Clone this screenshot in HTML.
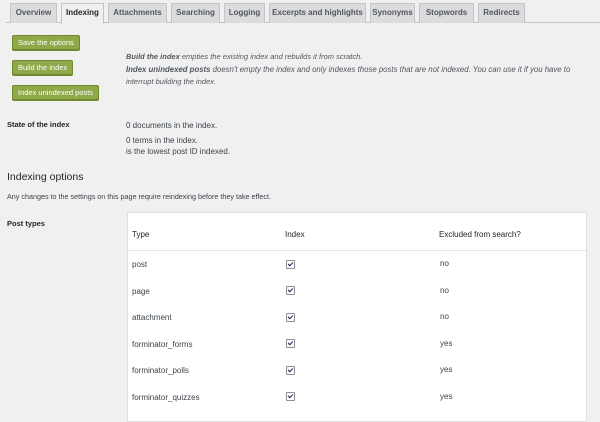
<!DOCTYPE html>
<html><head><meta charset="utf-8"><style>
*{margin:0;padding:0;box-sizing:border-box}
body{width:600px;height:411px;overflow:hidden;background:#f0f0f1;font-family:"Liberation Sans",sans-serif;color:#1d2327;position:relative;font-size:7.5px}
.a{position:absolute;white-space:nowrap}
.tabline{position:absolute;left:6px;right:0;top:22px;height:1px;background:#c3c4c7}
.tab{position:absolute;top:3px;height:20px;background:#dcdcde;border:1px solid #c3c4c7;border-bottom:none;font-size:8px;font-weight:bold;color:#50575e;text-align:center;line-height:18px}
.tab.on{background:#f0f0f1;color:#1d2327;height:21px}
.btn{position:absolute;left:12px;height:15px;background:#8fa84a;border:1px solid #6f8a2e;border-radius:2px;color:#fff;font-size:7.5px;line-height:13px;padding:0 5px;box-shadow:0 1px 0 #6f8a2e}
.it{font-style:italic;color:#50575e;font-size:7.5px}
.tbl{position:absolute;left:127px;top:212px;width:460px;height:210px;background:#fff;border:1px solid #e0e0e0}
.cb{position:absolute;width:9px;height:9px;border:1px solid #8c8f94;background:#fff;border-radius:1px}
.cb:after{content:"";position:absolute;left:2px;top:0px;width:2px;height:4px;border:solid #1e1e50;border-width:0 1.3px 1.3px 0;transform:rotate(45deg)}
.t{font-size:8px}
</style></head><body>
<div class="tabline"></div>
<div class="tab" style="left:10px;width:47px">Overview</div>
<div class="tab on" style="left:61px;width:43px">Indexing</div>
<div class="tab" style="left:108px;width:59px">Attachments</div>
<div class="tab" style="left:171px;width:49px">Searching</div>
<div class="tab" style="left:224px;width:41px">Logging</div>
<div class="tab" style="left:269px;width:97px">Excerpts and highlights</div>
<div class="tab" style="left:370px;width:45px">Synonyms</div>
<div class="tab" style="left:419px;width:55px">Stopwords</div>
<div class="tab" style="left:478px;width:47px">Redirects</div>

<div class="btn" style="top:35px">Save the options</div>
<div class="btn" style="top:60px">Build the index</div>
<div class="btn" style="top:85px">Index unindexed posts</div>

<div class="a it" style="left:126px;top:52px"><b>Build the index</b> empties the existing index and rebuilds it from scratch.</div>
<div class="a it" style="left:126px;top:65px;font-size:7.8px"><b>Index unindexed posts</b> doesn't empty the index and only indexes those posts that are not indexed. You can use it if you have to</div>
<div class="a it" style="left:126px;top:77px">interrupt building the index.</div>

<div class="a" style="left:7px;top:120px;font-weight:bold;font-size:7.5px">State of the index</div>
<div class="a t" style="left:126px;top:121px;color:#3c434a">0 documents in the index.</div>
<div class="a t" style="left:126px;top:136px;color:#3c434a">0 terms in the index.</div>
<div class="a t" style="left:126px;top:147px;color:#3c434a">is the lowest post ID indexed.</div>

<div class="a" style="left:7px;top:171px;font-size:10.5px">Indexing options</div>
<div class="a" style="left:7px;top:192px;font-size:7.2px;color:#3c434a">Any changes to the settings on this page require reindexing before they take effect.</div>
<div class="a" style="left:7px;top:219px;font-weight:bold">Post types</div>

<div class="tbl">
<div style="position:absolute;left:0;right:0;top:37px;height:1px;background:#e5e5e5"></div>
</div>
<div class="a t" style="left:132px;top:230px">Type</div>
<div class="a t" style="left:285px;top:230px">Index</div>
<div class="a t" style="left:439px;top:230px">Excluded from search?</div>

<div class="a t" style="left:132px;top:260px;color:#3c434a">post</div><div class="cb" style="left:286px;top:260px"></div><div class="a t" style="left:440px;top:259px;color:#3c434a">no</div>
<div class="a t" style="left:132px;top:287px;color:#3c434a">page</div><div class="cb" style="left:286px;top:286px"></div><div class="a t" style="left:440px;top:286px;color:#3c434a">no</div>
<div class="a t" style="left:132px;top:313px;color:#3c434a">attachment</div><div class="cb" style="left:286px;top:313px"></div><div class="a t" style="left:440px;top:312px;color:#3c434a">no</div>
<div class="a t" style="left:132px;top:340px;color:#3c434a">forminator_forms</div><div class="cb" style="left:286px;top:339px"></div><div class="a t" style="left:440px;top:339px;color:#3c434a">yes</div>
<div class="a t" style="left:132px;top:366px;color:#3c434a">forminator_polls</div><div class="cb" style="left:286px;top:366px"></div><div class="a t" style="left:440px;top:365px;color:#3c434a">yes</div>
<div class="a t" style="left:132px;top:393px;color:#3c434a">forminator_quizzes</div><div class="cb" style="left:286px;top:392px"></div><div class="a t" style="left:440px;top:392px;color:#3c434a">yes</div>
</body></html>
